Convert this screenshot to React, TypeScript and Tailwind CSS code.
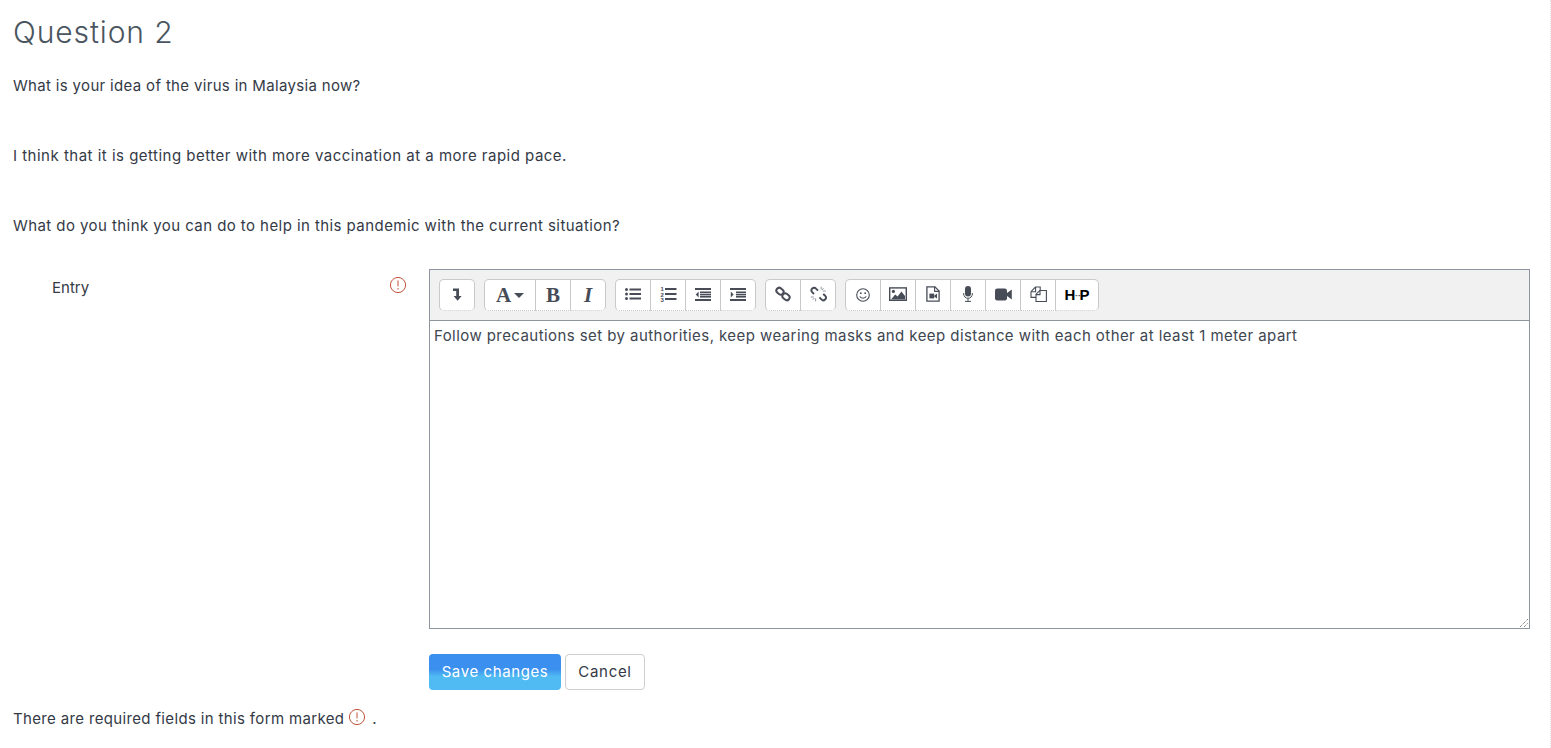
import React from "react";

const ic = "#474c57";

function Info({ className = "" }: { className?: string }) {
  return (
    <svg viewBox="0 0 18 18" className={className} fill="none">
      <circle cx="9" cy="9" r="7.6" stroke="#c2553a" strokeWidth="1" />
      <path d="M9 4.4v6" stroke="#c2553a" strokeWidth="1" />
      <path d="M9 12v1.6" stroke="#c2553a" strokeWidth="1" />
    </svg>
  );
}

function Btn({ w = "w-[35px]", first, last, children }: { w?: string; first?: boolean; last?: boolean; children: React.ReactNode }) {
  return (
    <div
      className={`${w} h-[32px] flex items-center justify-center bg-white border-t border-b border-[#c9c9c9] [border-bottom-style:dotted] border-r ${first ? "border-l rounded-l-[5px]" : ""} ${last ? "rounded-r-[5px]" : ""}`}
    >
      {children}
    </div>
  );
}

function Bars({ x, ys, h = 2 }: { x: number; ys: number[]; h?: number }) {
  return (
    <>
      {ys.map((y) => (
        <rect key={y} x={x} y={y} width={16 - x} height={h} fill={ic} />
      ))}
    </>
  );
}

function Toolbar() {
  return (
    <div className="h-[51px] bg-[#f1f1f1] border-b border-[#8f959e] flex items-center pl-[9px] gap-[9px]">
      <div className="flex">
        <Btn w="w-[36px]" first last>
          <svg viewBox="0 0 10 13" className="w-[10px] h-[13px] mt-[-1px]" fill={ic}>
            <path d="M1 0.5h6v7.5h2.6L5.6 12.8 1.6 8h2.6V3H1z" />
          </svg>
        </Btn>
      </div>
      <div className="flex">
        <Btn w="w-[52px]" first>
          <span className="font-['Liberation_Serif',serif] font-bold text-[21px] leading-none" style={{ color: ic }}>A</span>
          <span className="ml-[3px] w-0 h-0 border-l-[5px] border-r-[5px] border-t-[5px] border-l-transparent border-r-transparent border-t-[#474c57]" />
        </Btn>
        <Btn>
          <span className="font-['Liberation_Serif',serif] font-bold text-[21px] leading-none" style={{ color: ic }}>B</span>
        </Btn>
        <Btn last>
          <span className="font-['Liberation_Serif',serif] font-bold italic text-[21px] leading-none" style={{ color: ic }}>I</span>
        </Btn>
      </div>
      <div className="flex">
        <Btn w="w-[36px]" first>
          <svg viewBox="0 0 16 12" className="w-[16px] h-[12px] mt-[-2px]" fill={ic}>
            <circle cx="1.5" cy="1.5" r="1.5" />
            <circle cx="1.5" cy="6" r="1.5" />
            <circle cx="1.5" cy="10.5" r="1.5" />
            <Bars x={4.5} ys={[0.5, 5, 9.5]} />
          </svg>
        </Btn>
        <Btn>
          <svg viewBox="0 0 16 16" className="w-[17px] h-[16px] mt-[-2px]" fill={ic}>
            <text x="0" y="5" fontSize="6" fontFamily="Liberation Sans" fontWeight="700">1</text>
            <text x="0" y="10.5" fontSize="6" fontFamily="Liberation Sans" fontWeight="700">2</text>
            <text x="0" y="16" fontSize="6" fontFamily="Liberation Sans" fontWeight="700">3</text>
            <Bars x={4.5} ys={[2, 7, 12]} />
          </svg>
        </Btn>
        <Btn>
          <svg viewBox="0 0 16 13" className="w-[16px] h-[13px] mt-[-2px]" fill={ic}>
            <rect x="0" y="0" width="16" height="2" />
            <rect x="0" y="11" width="16" height="2" />
            <rect x="5" y="3.5" width="11" height="1.6" />
            <rect x="5" y="5.8" width="11" height="1.6" />
            <rect x="5" y="8" width="11" height="1.6" />
            <path d="M3.6 3.6v5.8L0.8 6.5z" />
          </svg>
        </Btn>
        <Btn last>
          <svg viewBox="0 0 16 13" className="w-[16px] h-[13px] mt-[-2px]" fill={ic}>
            <rect x="0" y="0" width="16" height="2" />
            <rect x="0" y="11" width="16" height="2" />
            <rect x="6" y="3.5" width="10" height="1.6" />
            <rect x="6" y="5.8" width="10" height="1.6" />
            <rect x="6" y="8" width="10" height="1.6" />
            <path d="M0.8 3.6v5.8L3.6 6.5z" />
          </svg>
        </Btn>
      </div>
      <div className="flex">
        <Btn w="w-[36px]" first>
          <svg viewBox="0 0 16 16" className="w-[16px] h-[16px] mt-[-2px]" fill="none" stroke={ic} strokeWidth="2">
            <rect x="1.2" y="2.4" width="7.6" height="5.6" rx="2.8" transform="rotate(40 5 5.2)" />
            <rect x="7.2" y="8" width="7.6" height="5.6" rx="2.8" transform="rotate(40 11 10.8)" />
          </svg>
        </Btn>
        <Btn last>
          <svg viewBox="0 0 17 16" className="w-[17px] h-[16px] mt-[-2px]" fill="none" stroke={ic} strokeWidth="1.9">
            <path d="M8 4.6 6 2.6a2.6 2.6 0 0 0-3.8 3.6L4 8" />
            <path d="M9.4 11.4l2 2a2.6 2.6 0 0 0 3.8-3.6L13.2 8" />
            <path d="M11.2 0.6v3M13.6 2.2l-1.6 1.8M15.8 5h-3M0.8 11h3M2.6 13.8 4.4 12M5.6 15.4v-3" stroke="#8a8f98" strokeWidth="0.9" />
          </svg>
        </Btn>
      </div>
      <div className="flex">
        <Btn w="w-[36px]" first>
          <svg viewBox="0 0 14 14" className="w-[14px] h-[14px]" fill="none" stroke={ic} strokeWidth="1.1">
            <circle cx="7" cy="7" r="6.3" />
            <circle cx="4.8" cy="5.2" r="0.9" fill={ic} stroke="none" />
            <circle cx="9.2" cy="5.2" r="0.9" fill={ic} stroke="none" />
            <path d="M3.8 8.4c1 2.4 5.4 2.4 6.4 0" />
          </svg>
        </Btn>
        <Btn>
          <svg viewBox="0 0 18 14" className="w-[18px] h-[14px] mt-[-2px]" fill="none">
            <rect x="0.7" y="0.9" width="16.6" height="12.4" stroke={ic} strokeWidth="1.4" />
            <circle cx="4.4" cy="4.4" r="1.6" fill={ic} />
            <path d="M2 12.4 6.2 7.6l2.4 2 3.8-5 3.6 4.4v3.4z" fill={ic} />
          </svg>
        </Btn>
        <Btn>
          <svg viewBox="0 0 14 16" className="w-[14px] h-[16px] mt-[-2px]" fill="none">
            <path d="M0.9 0.8h8l4.2 4.2v10.2H.9z" stroke={ic} strokeWidth="1.3" />
            <path d="M8.6 0.8v4.6h4.6" stroke={ic} strokeWidth="1.1" />
            <rect x="3.4" y="7.6" width="4.8" height="4.8" fill={ic} />
            <path d="M8.2 9.8l2.8-2.2v5l-2.8-2.2z" fill={ic} />
          </svg>
        </Btn>
        <Btn>
          <svg viewBox="0 0 10 16" className="w-[10px] h-[16px] mt-[-2px]" fill="none" stroke={ic}>
            <rect x="2" y="0" width="6" height="10.4" rx="3" fill={ic} stroke="none" />
            <path d="M0.7 7v1a4.3 4.3 0 0 0 8.6 0V7M5 12.5v2.8M2 15.4h6" strokeWidth="1" />
          </svg>
        </Btn>
        <Btn>
          <svg viewBox="0 0 17 13" className="w-[17px] h-[13px] mt-[-2px]" fill={ic}>
            <rect x="0" y="0.5" width="12" height="12" rx="2.2" />
            <path d="M12 5 16.8 1.4v10.2L12 8z" />
          </svg>
        </Btn>
        <Btn>
          <svg viewBox="0 0 17 16" className="w-[17px] h-[16px] mt-[-2px]" fill="none" stroke={ic} strokeWidth="1.1">
            <path d="M6 11.4H1V5.6L5.4 1h4.8v3.6" />
            <path d="M1 5.8h4.6V1" />
            <path d="M6 10V8.2l3.8-3.7h6.6v11H6z" />
            <path d="M6 8.6h4V4.6" />
          </svg>
        </Btn>
        <Btn w="w-[43px]" last>
          <span className="font-['Liberation_Sans',sans-serif] font-bold text-[15px] leading-none text-black flex items-center mt-[-1px]">
            H<span className="text-[8px] font-normal -mx-[2px]">↔</span>P
          </span>
        </Btn>
      </div>
    </div>
  );
}

export default function App() {
  return (
    <div className="w-[1551px] h-[748px] overflow-hidden bg-white font-['Inter',sans-serif] text-[15px] text-[#343a46] border-r border-dotted border-r-[#e4e4e4] pl-[13px] pr-[20px]">
      <h2 className="text-[30px] leading-[36px] font-light text-[#4a5560] pt-[14px] tracking-[0.9px]">Question 2</h2>
      <p className="mt-[26px] leading-[20px] tracking-[0.33px]">What is your idea of the virus in Malaysia now?</p>
      <p className="mt-[50px] leading-[20px] tracking-[0.49px]">I think that it is getting better with more vaccination at a more rapid pace.</p>
      <p className="mt-[50px] leading-[20px] tracking-[0.43px]">What do you think you can do to help in this pandemic with the current situation?</p>

      <div className="flex mt-[33px]">
        <div className="w-[416px] flex justify-between items-start pl-[39px] pr-[22px] pt-[9px]">
          <span className="leading-[20px]">Entry</span>
          <Info className="w-[18px] h-[18px] mt-[-2px]" />
        </div>
        <div className="w-[1101px]">
          <div className="h-[360px] border border-[#8f959e] relative flex flex-col">
            <Toolbar />
            <div className="flex-1 px-[4px] pt-[5px] leading-[20px] text-[#3e4650] tracking-[0.43px]">
              Follow precautions set by authorities, keep wearing masks and keep distance with each other at least 1 meter apart
            </div>
            <svg viewBox="0 0 10 10" className="absolute right-0 bottom-0 w-[10px] h-[10px]" stroke="#555" strokeWidth="1" strokeDasharray="1 1">
              <path d="M1 9 9 1M5 9 9 5" />
            </svg>
          </div>
          <div className="flex gap-[4px] mt-[25px]">
            <div className="w-[132px] h-[36px] rounded-[4px] bg-[linear-gradient(#3b8fee_0,#3b8fee_42%,#50baf3_62%,#50baf3_100%)] text-white flex items-center justify-center tracking-[0.6px] pt-px">Save changes</div>
            <div className="w-[80px] h-[36px] rounded-[4px] border border-[#cfcfcf] flex items-center justify-center tracking-[0.7px] pt-px">Cancel</div>
          </div>
        </div>
      </div>

      <div className="flex items-center mt-[19px] leading-[20px]">
        <span className="tracking-[0.35px]">There are required fields in this form marked</span>
        <Info className="w-[18px] h-[18px] ml-[4px] mt-[-4px]" />
        <span className="ml-[6px]">.</span>
      </div>
    </div>
  );
}
